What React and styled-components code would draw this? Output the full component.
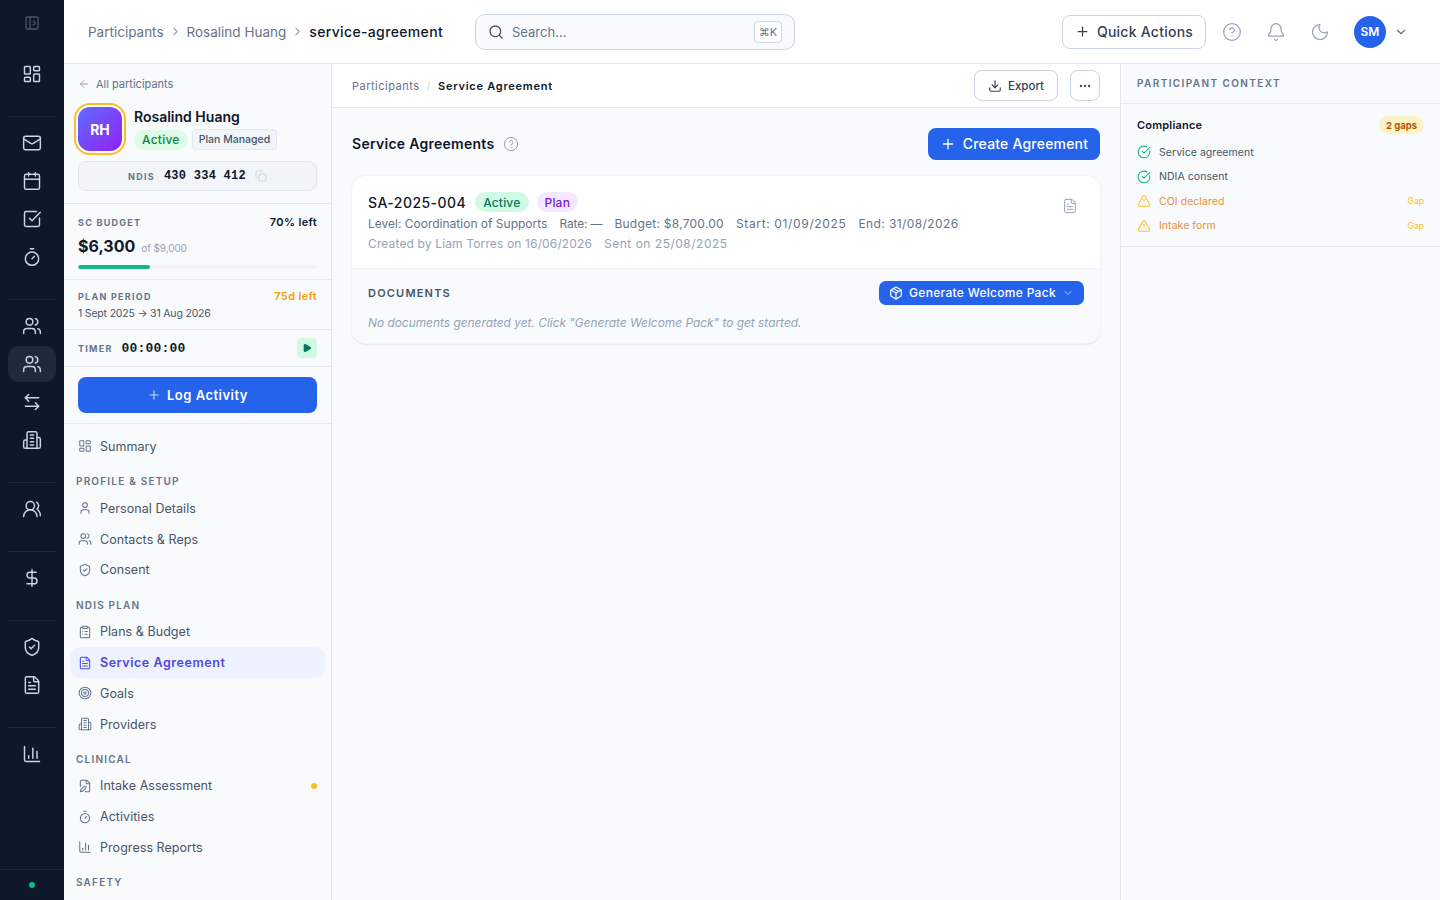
import React from "react"
import styled, { createGlobalStyle } from "styled-components"
import {
  AlertTriangle,
  ArrowLeft,
  ArrowLeftRight,
  Bell,
  Calendar,
  ChartColumn,
  ChevronDown,
  ChevronRight,
  CircleCheckBig,
  CircleHelp,
  ClipboardList,
  Copy,
  DollarSign,
  Download,
  Ellipsis,
  FilePen,
  FileText,
  LayoutDashboard,
  Mail,
  Moon,
  Package,
  PanelLeftOpen,
  Play,
  Plus,
  Search,
  ShieldCheck,
  SquareCheckBig,
  Target,
  Timer,
  User,
  Users,
  UsersRound,
} from "lucide-react"

const GlobalStyle = createGlobalStyle`
  html, body {
    margin: 0;
    height: 100%;
    overflow: hidden;
    font-family: Inter, "Liberation Sans", sans-serif;
    color: #0f172a;
    background: #fff;
  }
  * { box-sizing: border-box; }
`

// tower with two wings, the one used for providers
const BuildingIcon = ({ size = 20, strokeWidth = 1.75 }) => (
  <svg
    width={size}
    height={size}
    viewBox="0 0 24 24"
    fill="none"
    stroke="currentColor"
    strokeWidth={strokeWidth}
    strokeLinecap="round"
    strokeLinejoin="round"
  >
    <path d="M6 22V4a2 2 0 0 1 2-2h8a2 2 0 0 1 2 2v18Z" />
    <path d="M6 12H4a2 2 0 0 0-2 2v6a2 2 0 0 0 2 2h2" />
    <path d="M18 9h2a2 2 0 0 1 2 2v9a2 2 0 0 1-2 2h-2" />
    <path d="M10 6h4" />
    <path d="M10 10h4" />
    <path d="M10 14h4" />
    <path d="M10 18h4" />
  </svg>
)

const Shell = styled.div`
  display: flex;
  height: 900px;
  overflow: hidden;
`

const Rail = styled.aside`
  width: 64px;
  flex: none;
  background: #0f172a;
  display: flex;
  flex-direction: column;
  height: 100%;
`

const RailTop = styled.div`
  height: 48px;
  padding-bottom: 2px;
  display: flex;
  align-items: center;
  justify-content: center;
  color: #475569;
`

const RailGroup = styled.div`
  margin: 0 8px;
  padding: 8px 0 24px;
  display: flex;
  flex-direction: column;
  gap: 2px;
  border-bottom: 1px solid #1e293b;
  &:nth-last-child(2) { border-bottom: 0; }
`

const RailButton = styled.div`
  height: 36px;
  border-radius: 10px;
  display: flex;
  align-items: center;
  justify-content: center;
  color: #cbd5e1;
  background: ${(p) => (p.$active ? "#1e293b" : "transparent")};
`

const RailFoot = styled.div`
  margin-top: auto;
  height: 31px;
  border-top: 1px solid #1e293b;
  display: flex;
  align-items: center;
  justify-content: center;
`

const OnlineDot = styled.span`
  width: 6px;
  height: 6px;
  border-radius: 50%;
  background: #10b981;
`

const Body = styled.div`
  flex: 1;
  min-width: 0;
  display: flex;
  flex-direction: column;
`

const TopBar = styled.header`
  height: 64px;
  flex: none;
  border-bottom: 1px solid #e2e8f0;
  display: flex;
  align-items: center;
  padding: 0 32px 0 24px;
`

const Crumbs = styled.nav`
  display: flex;
  align-items: center;
  gap: 5px;
  font-size: 13.5px;
  color: #64748b;
  width: 387px;
  flex: none;
  svg { color: #94a3b8; }
`

const CrumbNow = styled.span`
  color: #0f172a;
  font-size: 14px;
  font-weight: 500;
  letter-spacing: 0.35px;
`

const SearchBox = styled.div`
  width: 320px;
  height: 36px;
  border: 1px solid #cbd5e1;
  border-radius: 10px;
  background: #f8fafc;
  display: flex;
  align-items: center;
  gap: 8px;
  padding: 0 12px;
  font-size: 13px;
  color: #64748b;
  svg { color: #475569; }
`

const Kbd = styled.span`
  margin-left: auto;
  width: 28px;
  height: 22px;
  border: 1px solid #cbd5e1;
  border-radius: 4px;
  background: #fff;
  font-size: 11px;
  display: flex;
  align-items: center;
  justify-content: center;
`

const TopActions = styled.div`
  margin-left: auto;
  display: flex;
  align-items: center;
`

const QuickButton = styled.div`
  width: 144px;
  height: 34px;
  border: 1px solid #cbd5e1;
  border-radius: 8px;
  display: flex;
  align-items: center;
  justify-content: center;
  gap: 7px;
  font-size: 14px;
  font-weight: 500;
  letter-spacing: 0.25px;
  color: #334155;
  margin-right: 16px;
`

const TopIcon = styled.span`
  width: 20px;
  height: 20px;
  margin-right: 24px;
  display: flex;
  color: #94a3b8;
`

const UserAvatar = styled.div`
  width: 32px;
  height: 32px;
  border-radius: 50%;
  background: #2563eb;
  color: #fff;
  font-size: 12px;
  font-weight: 600;
  display: flex;
  align-items: center;
  justify-content: center;
  margin-right: 8px;
`

const Columns = styled.div`
  flex: 1;
  min-height: 0;
  display: flex;
`

const Side = styled.aside`
  width: 268px;
  flex: none;
  background: #f8fafc;
  border-right: 1px solid #e2e8f0;
  overflow: hidden;
`

const ProfileBlock = styled.div`
  padding: 13px 14px 12px;
  border-bottom: 1px solid #e2e8f0;
`

const BackLink = styled.div`
  height: 14px;
  display: flex;
  align-items: center;
  gap: 6px;
  font-size: 11px;
  color: #64748b;
  svg { color: #94a3b8; }
`

const ProfileRow = styled.div`
  display: flex;
  gap: 12px;
  margin-top: 16px;
`

const Avatar = styled.div`
  width: 44px;
  height: 44px;
  border-radius: 12px;
  background: linear-gradient(135deg, #5f6bff, #9321f0);
  box-shadow: 0 0 0 2px #fff, 0 0 0 4px #fbbf24;
  color: #fff;
  font-size: 14px;
  font-weight: 700;
  display: flex;
  align-items: center;
  justify-content: center;
  flex: none;
`

const ProfileName = styled.div`
  font-size: 14px;
  font-weight: 600;
  line-height: 20px;
`

const BadgeRow = styled.div`
  display: flex;
  align-items: center;
  gap: 4px;
  margin-top: 2px;
`

const ActivePill = styled.span`
  height: 20px;
  padding: 0 8px;
  border-radius: 999px;
  background: #dcfce7;
  color: #15803d;
  font-size: 12px;
  font-weight: 500;
  letter-spacing: 0.25px;
  display: flex;
  align-items: center;
`

const PlanTag = styled.span`
  height: 21px;
  padding: 0 6px;
  border: 1px solid #e2e8f0;
  border-radius: 4px;
  background: #f1f5f9;
  color: #475569;
  font-size: 10.5px;
  font-weight: 500;
  display: flex;
  align-items: center;
`

const NdisBox = styled.div`
  height: 30px;
  margin-top: 10px;
  border: 1px solid #e2e8f0;
  border-radius: 8px;
  background: #f1f5f9;
  display: flex;
  align-items: center;
  justify-content: center;
  gap: 9px;
  svg { color: #cbd5e1; }
`

const MiniLabel = styled.span`
  font-size: 9px;
  font-weight: 700;
  letter-spacing: 0.14em;
  color: #64748b;
  text-transform: uppercase;
`

const Mono = styled.span`
  font-family: "Liberation Mono", monospace;
  font-size: 12px;
  font-weight: 700;
  letter-spacing: 0.25px;
  color: #0f172a;
`

const Stat = styled.div`
  padding: ${(p) => p.$pad};
  border-bottom: 1px solid #e2e8f0;
`

const StatHead = styled.div`
  height: 14px;
  display: flex;
  justify-content: space-between;
  align-items: center;
  font-size: 11px;
  font-weight: 600;
  letter-spacing: 0.35px;
  color: ${(p) => p.$color || "#0f172a"};
`

const Amount = styled.div`
  height: 24px;
  display: flex;
  align-items: baseline;
  gap: 6px;
  margin-top: 5px;
  font-size: 16px;
  line-height: 24px;
  font-weight: 700;
`

const AmountOf = styled.span`
  font-size: 10px;
  font-weight: 400;
  letter-spacing: -0.1px;
  color: #94a3b8;
`

const Track = styled.div`
  height: 4px;
  margin-top: 7px;
  border-radius: 2px;
  background: #f1f5f9;
  overflow: hidden;
`

const Fill = styled.div`
  height: 100%;
  background: #10b981;
  border-radius: 2px;
`

const PeriodText = styled.div`
  margin-top: 3px;
  font-size: 10.5px;
  letter-spacing: -0.18px;
  line-height: 16px;
  color: #475569;
`

const TimerRow = styled.div`
  height: 37px;
  padding: 0 14px;
  border-bottom: 1px solid #e2e8f0;
  display: flex;
  align-items: center;
  gap: 9px;
`

const TimerValue = styled(Mono)`
  font-size: 13px;
  letter-spacing: 0.2px;
`

const PlayButton = styled.div`
  margin-left: auto;
  width: 20px;
  height: 20px;
  border-radius: 4px;
  background: #d1fae5;
  color: #047857;
  display: flex;
  align-items: center;
  justify-content: center;
`

const LogBlock = styled.div`
  padding: 10px 14px;
  border-bottom: 1px solid #e2e8f0;
`

const LogButton = styled.div`
  height: 36px;
  border-radius: 8px;
  background: #2563eb;
  color: #fff;
  font-size: 13px;
  font-weight: 600;
  letter-spacing: 0.5px;
  display: flex;
  align-items: center;
  justify-content: center;
  gap: 6px;
  svg { opacity: 0.75; }
`

const Nav = styled.nav`
  padding: 7px 6px;
`

const NavHeading = styled.div`
  padding: 12.6px 6px 4.6px;
  font-size: 10px;
  font-weight: 600;
  line-height: 14px;
  letter-spacing: 0.12em;
  text-transform: uppercase;
  color: #64748b;
`

const NavItem = styled.div`
  height: 30.75px;
  padding: 0 8px;
  border-radius: 10px;
  display: flex;
  align-items: center;
  gap: 8px;
  font-size: 12.5px;
  font-weight: ${(p) => (p.$active ? 600 : 400)};
  letter-spacing: ${(p) => (p.$active ? "0.55px" : "0.05px")};
  color: ${(p) => (p.$active ? "#4f46e5" : "#475569")};
  background: ${(p) => (p.$active ? "#eef2ff" : "transparent")};
  svg { color: ${(p) => (p.$active ? "#4f46e5" : "#64748b")}; flex: none; }
`

const NavDot = styled.span`
  margin-left: auto;
  width: 6px;
  height: 6px;
  border-radius: 50%;
  background: #fbbf24;
`

const Main = styled.main`
  flex: 1;
  min-width: 0;
  background: #f8fafc;
`

const MainHead = styled.div`
  height: 44px;
  padding: 0 20px;
  background: #fff;
  border-bottom: 1px solid #e2e8f0;
  display: flex;
  align-items: center;
  font-size: 11px;
  letter-spacing: 0.5px;
  color: #64748b;
`

const Slash = styled.span`
  margin: 0 7px;
  color: #cbd5e1;
`

const MainCrumbNow = styled.span`
  font-weight: 600;
  letter-spacing: 0.75px;
  color: #0f172a;
`

const HeadActions = styled.div`
  margin-left: auto;
  display: flex;
  align-items: center;
  gap: 12px;
`

const GhostButton = styled.div`
  height: 31px;
  width: ${(p) => p.$w};
  border: 1px solid #cbd5e1;
  border-radius: 8px;
  background: #fff;
  color: #334155;
  font-size: 11.5px;
  font-weight: 500;
  letter-spacing: 0;
  display: flex;
  align-items: center;
  justify-content: center;
  gap: 6px;
`

const Content = styled.div`
  padding: 20px;
`

const TitleRow = styled.div`
  display: flex;
  align-items: center;
  gap: 9px;
  height: 32px;
`

const Title = styled.h2`
  margin: 0;
  padding-bottom: 2px;
  font-size: 14px;
  font-weight: 600;
  letter-spacing: 0.27px;
`

const HelpMark = styled.span`
  display: flex;
  color: #94a3b8;
`

const PrimaryButton = styled.div`
  margin-left: auto;
  height: 32px;
  width: 172px;
  padding-bottom: 1px;
  border-radius: 8px;
  background: #2563eb;
  color: #fff;
  font-size: 14px;
  font-weight: 500;
  letter-spacing: 0.2px;
  display: flex;
  align-items: center;
  justify-content: center;
  gap: 7px;
`

const Card = styled.section`
  margin-top: 16px;
  border-radius: 14px;
  background: #fff;
  box-shadow: 0 0 0 1px #f1f5f9, 0 1px 2px rgba(15, 23, 42, 0.2);
  overflow: hidden;
`

const CardTop = styled.div`
  height: 93px;
  padding: 16px;
  display: flex;
  justify-content: space-between;
  border-bottom: 1px solid #f1f5f9;
`

const CardIcon = styled.span`
  display: flex;
  height: 16px;
  color: #94a3b8;
  margin: 6px 6px 0 0;
`

const CardTitleRow = styled.div`
  display: flex;
  align-items: center;
  gap: 8px;
  height: 20px;
`

const CardId = styled.span`
  margin-right: 1px;
  font-size: 14px;
  font-weight: 500;
  letter-spacing: 0.45px;
`

const Chip = styled.span`
  height: 20px;
  padding: 0 8px;
  border-radius: 999px;
  font-size: 12px;
  font-weight: 500;
  letter-spacing: 0.2px;
  display: flex;
  align-items: center;
  background: ${(p) => p.$bg};
  color: ${(p) => p.$fg};
`

const MetaRow = styled.div`
  display: flex;
  gap: 12px;
  margin-top: ${(p) => p.$top};
  font-size: 12px;
  line-height: 18px;
  color: ${(p) => p.$color};
`

const MetaItem = styled.span`
  letter-spacing: ${(p) => p.$ls || 0}px;
`

const CardBottom = styled.div`
  height: 74px;
  padding: 12px 16px;
  background: #f8fafc;
`

const DocsHead = styled.div`
  display: flex;
  align-items: center;
  justify-content: space-between;
`

const DocsTitle = styled.span`
  font-size: 11px;
  font-weight: 600;
  letter-spacing: 1.2px;
  color: #475569;
`

const GenerateButton = styled.div`
  height: 24px;
  width: 205px;
  padding-bottom: 1px;
  border-radius: 7px;
  background: #2563eb;
  color: #fff;
  font-size: 12px;
  font-weight: 500;
  letter-spacing: 0.3px;
  display: flex;
  align-items: center;
  justify-content: center;
  gap: 6px;
  svg:last-child { opacity: 0.7; }
`

const EmptyNote = styled.div`
  margin-top: 10px;
  font-size: 11.9px;
  line-height: 16px;
  font-style: italic;
  color: #94a3b8;
`

const Context = styled.aside`
  width: 320px;
  flex: none;
  background: #f8fafc;
  border-left: 1px solid #e2e8f0;
`

const ContextHead = styled.div`
  height: 40px;
  padding: 0 16px 2px;
  border-bottom: 1px solid #e2e8f0;
  display: flex;
  align-items: center;
  font-size: 10px;
  font-weight: 600;
  letter-spacing: 0.14em;
  color: #64748b;
`

const ContextBlock = styled.div`
  padding: 12px 16px 8px;
  border-bottom: 1px solid #e2e8f0;
`

const ComplianceHead = styled.div`
  display: flex;
  align-items: center;
  justify-content: space-between;
  height: 18px;
  margin-bottom: 6.3px;
`

const ComplianceTitle = styled.span`
  font-size: 11px;
  font-weight: 600;
  letter-spacing: 0.2px;
`

const GapPill = styled.span`
  width: 45px;
  height: 18px;
  border-radius: 999px;
  background: #fef3c7;
  color: #b45309;
  font-size: 9.5px;
  font-weight: 700;
  display: flex;
  align-items: center;
  justify-content: center;
`

const CheckRow = styled.div`
  height: 24.4px;
  display: flex;
  align-items: center;
  gap: 8px;
  font-size: 10.5px;
  letter-spacing: 0.05px;
  color: ${(p) => (p.$gap ? "#e8913a" : "#475569")};
  svg { color: ${(p) => (p.$gap ? "#fbbf24" : "#10b981")}; flex: none; }
`

const GapNote = styled.span`
  margin-left: auto;
  font-size: 8.5px;
  color: #fbbf24;
`

const railGroups = [
  [{ icon: LayoutDashboard }],
  [{ icon: Mail }, { icon: Calendar }, { icon: SquareCheckBig }, { icon: Timer }],
  [{ icon: Users }, { icon: Users, active: true }, { icon: ArrowLeftRight }, { icon: BuildingIcon }],
  [{ icon: UsersRound }],
  [{ icon: DollarSign }],
  [{ icon: ShieldCheck }, { icon: FileText }],
  [{ icon: ChartColumn }],
]

const navSections = [
  { items: [{ label: "Summary", icon: LayoutDashboard }] },
  {
    title: "Profile & Setup",
    items: [
      { label: "Personal Details", icon: User },
      { label: "Contacts & Reps", icon: Users },
      { label: "Consent", icon: ShieldCheck },
    ],
  },
  {
    title: "NDIS Plan",
    items: [
      { label: "Plans & Budget", icon: ClipboardList },
      { label: "Service Agreement", icon: FileText, active: true },
      { label: "Goals", icon: Target },
      { label: "Providers", icon: BuildingIcon },
    ],
  },
  {
    title: "Clinical",
    items: [
      { label: "Intake Assessment", icon: FilePen, dot: true },
      { label: "Activities", icon: Timer },
      { label: "Progress Reports", icon: ChartColumn },
    ],
  },
  { title: "Safety", items: [] },
]

const checks = [
  { label: "Service agreement" },
  { label: "NDIA consent" },
  { label: "COI declared", gap: true },
  { label: "Intake form", gap: true },
]

const App = () => {
  return (
    <Shell>
      <GlobalStyle />
      <Rail>
        <RailTop>
          <PanelLeftOpen size={16} />
        </RailTop>
        {railGroups.map((group, index) => (
          <RailGroup key={index}>
            {group.map((item, i) => {
              const Icon = item.icon
              return (
                <RailButton key={i} $active={item.active}>
                  <Icon size={20} strokeWidth={1.75} />
                </RailButton>
              )
            })}
          </RailGroup>
        ))}
        <RailFoot>
          <OnlineDot />
        </RailFoot>
      </Rail>

      <Body>
        <TopBar>
          <Crumbs>
            <span>Participants</span>
            <ChevronRight size={13} />
            <span>Rosalind Huang</span>
            <ChevronRight size={13} />
            <CrumbNow>service-agreement</CrumbNow>
          </Crumbs>
          <SearchBox>
            <Search size={16} />
            <span>Search...</span>
            <Kbd>⌘K</Kbd>
          </SearchBox>
          <TopActions>
            <QuickButton>
              <Plus size={15} />
              Quick Actions
            </QuickButton>
            <TopIcon><CircleHelp size={20} strokeWidth={1.5} /></TopIcon>
            <TopIcon><Bell size={20} strokeWidth={1.5} /></TopIcon>
            <TopIcon><Moon size={20} strokeWidth={1.5} /></TopIcon>
            <UserAvatar>SM</UserAvatar>
            <ChevronDown size={14} color="#64748b" />
          </TopActions>
        </TopBar>

        <Columns>
          <Side>
            <ProfileBlock>
              <BackLink>
                <ArrowLeft size={12} />
                All participants
              </BackLink>
              <ProfileRow>
                <Avatar>RH</Avatar>
                <div>
                  <ProfileName>Rosalind Huang</ProfileName>
                  <BadgeRow>
                    <ActivePill>Active</ActivePill>
                    <PlanTag>Plan Managed</PlanTag>
                  </BadgeRow>
                </div>
              </ProfileRow>
              <NdisBox>
                <MiniLabel>NDIS</MiniLabel>
                <Mono>430 334 412</Mono>
                <Copy size={12} />
              </NdisBox>
            </ProfileBlock>

            <Stat $pad="11px 14px 10px">
              <StatHead>
                <MiniLabel>SC Budget</MiniLabel>
                70% left
              </StatHead>
              <Amount>
                $6,300
                <AmountOf>of $9,000</AmountOf>
              </Amount>
              <Track>
                <Fill style={{ width: "30%" }} />
              </Track>
            </Stat>

            <Stat $pad="9px 14px 7px">
              <StatHead $color="#f59e0b">
                <MiniLabel>Plan Period</MiniLabel>
                75d left
              </StatHead>
              <PeriodText>1 Sept 2025 → 31 Aug 2026</PeriodText>
            </Stat>

            <TimerRow>
              <MiniLabel>Timer</MiniLabel>
              <TimerValue>00:00:00</TimerValue>
              <PlayButton>
                <Play size={10} fill="currentColor" />
              </PlayButton>
            </TimerRow>

            <LogBlock>
              <LogButton>
                <Plus size={14} />
                Log Activity
              </LogButton>
            </LogBlock>

            <Nav>
              {navSections.map((section, index) => (
                <div key={index}>
                  {section.title && <NavHeading>{section.title}</NavHeading>}
                  {section.items.map((item) => {
                    const Icon = item.icon
                    return (
                      <NavItem key={item.label} $active={item.active}>
                        <Icon size={14} strokeWidth={1.75} />
                        {item.label}
                        {item.dot && <NavDot />}
                      </NavItem>
                    )
                  })}
                </div>
              ))}
            </Nav>
          </Side>

          <Main>
            <MainHead>
              Participants
              <Slash>/</Slash>
              <MainCrumbNow>Service Agreement</MainCrumbNow>
              <HeadActions>
                <GhostButton $w="84px">
                  <Download size={14} />
                  Export
                </GhostButton>
                <GhostButton $w="30px">
                  <Ellipsis size={14} />
                </GhostButton>
              </HeadActions>
            </MainHead>
            <Content>
              <TitleRow>
                <Title>Service Agreements</Title>
                <HelpMark>
                  <CircleHelp size={16} strokeWidth={1.5} />
                </HelpMark>
                <PrimaryButton>
                  <Plus size={16} />
                  Create Agreement
                </PrimaryButton>
              </TitleRow>
              <Card>
                <CardTop>
                  <div>
                    <CardTitleRow>
                      <CardId>SA-2025-004</CardId>
                      <Chip $bg="#d1fae5" $fg="#047857">Active</Chip>
                      <Chip $bg="#f3e8ff" $fg="#7e14d8">Plan</Chip>
                    </CardTitleRow>
                    <MetaRow $color="#64748b" $top="3px">
                      <MetaItem>Level: Coordination of Supports</MetaItem>
                      <MetaItem $ls={-0.15}>Rate: —</MetaItem>
                      <MetaItem $ls={0.25}>Budget: $8,700.00</MetaItem>
                      <MetaItem $ls={0.65}>Start: 01/09/2025</MetaItem>
                      <MetaItem $ls={0.4}>End: 31/08/2026</MetaItem>
                    </MetaRow>
                    <MetaRow $color="#94a3b8" $top="2px">
                      <MetaItem $ls={0.14}>Created by Liam Torres on 16/06/2026</MetaItem>
                      <MetaItem $ls={0.5}>Sent on 25/08/2025</MetaItem>
                    </MetaRow>
                  </div>
                  <CardIcon>
                    <FileText size={16} strokeWidth={1.5} />
                  </CardIcon>
                </CardTop>
                <CardBottom>
                  <DocsHead>
                    <DocsTitle>DOCUMENTS</DocsTitle>
                    <GenerateButton>
                      <Package size={14} />
                      Generate Welcome Pack
                      <ChevronDown size={12} />
                    </GenerateButton>
                  </DocsHead>
                  <EmptyNote>
                    No documents generated yet. Click "Generate Welcome Pack" to get started.
                  </EmptyNote>
                </CardBottom>
              </Card>
            </Content>
          </Main>

          <Context>
            <ContextHead>PARTICIPANT CONTEXT</ContextHead>
            <ContextBlock>
              <ComplianceHead>
                <ComplianceTitle>Compliance</ComplianceTitle>
                <GapPill>2 gaps</GapPill>
              </ComplianceHead>
              {checks.map((check) => {
                const Icon = check.gap ? AlertTriangle : CircleCheckBig
                return (
                  <CheckRow key={check.label} $gap={check.gap}>
                    <Icon size={14} strokeWidth={1.75} />
                    {check.label}
                    {check.gap && <GapNote>Gap</GapNote>}
                  </CheckRow>
                )
              })}
            </ContextBlock>
          </Context>
        </Columns>
      </Body>
    </Shell>
  )
}

export default App
